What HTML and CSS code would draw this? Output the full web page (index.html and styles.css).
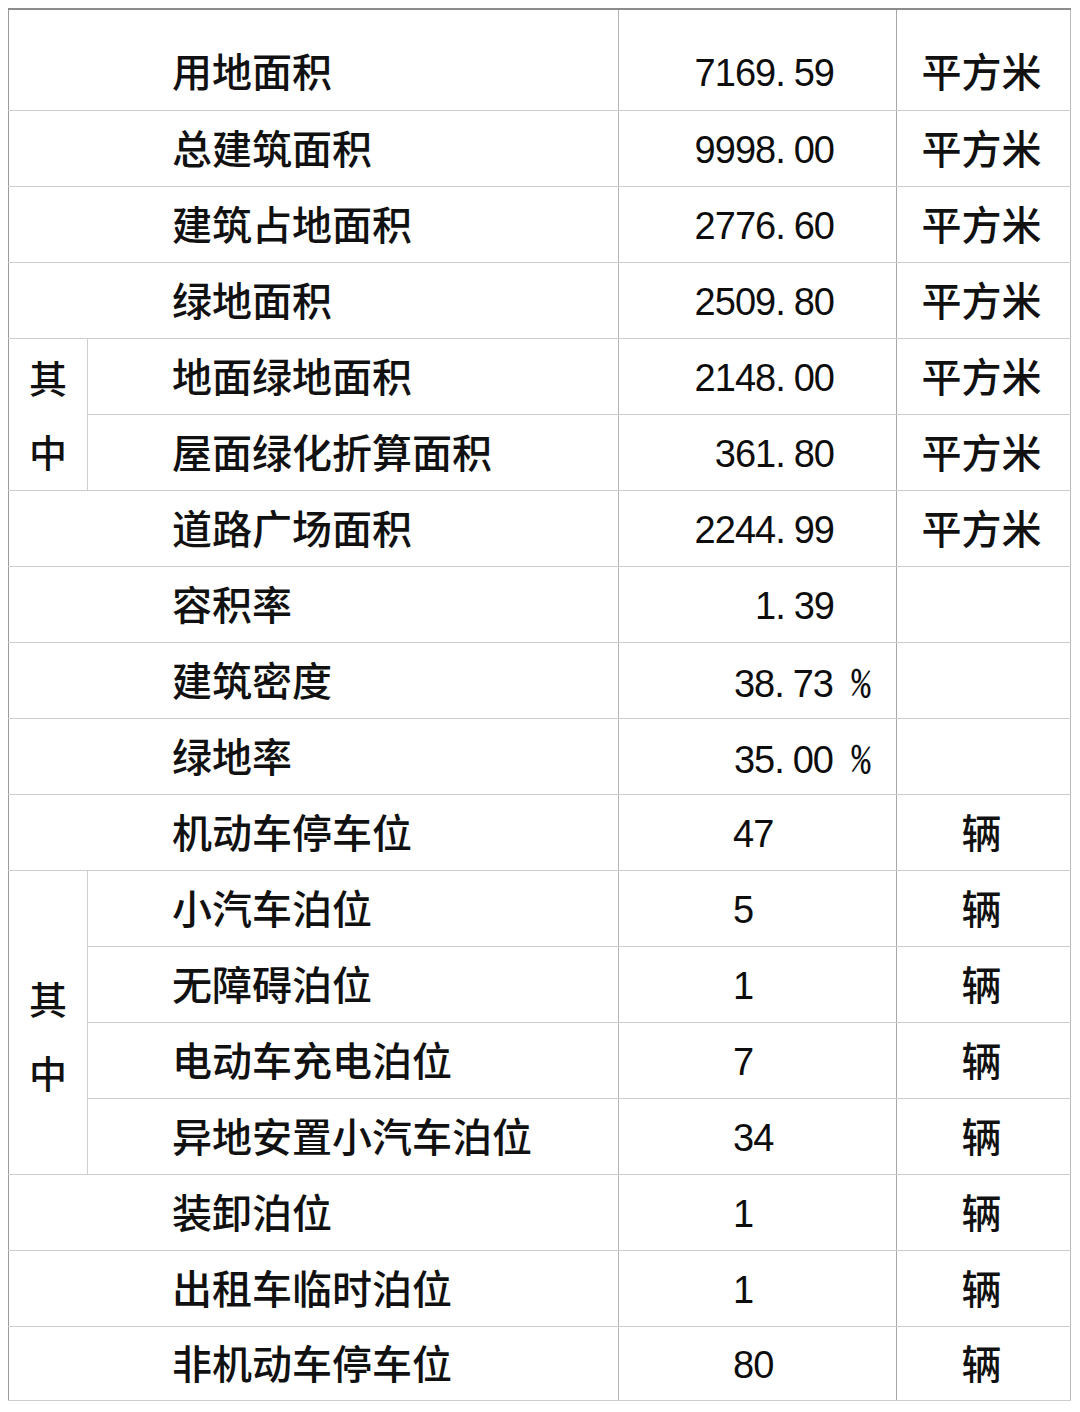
FILE: index.html
```html
<!DOCTYPE html>
<html lang="zh-CN">
<head>
<meta charset="utf-8">
<title>技术经济指标</title>
<link rel="stylesheet" href="styles.css">
</head>
<body>
<table class="sheet">
  <colgroup>
    <col class="c-side">
    <col class="c-label">
    <col class="c-value">
    <col class="c-unit">
  </colgroup>
  <tbody>
    <tr class="first">
      <td class="label" colspan="2">用地面积</td>
      <td class="value dec">7169<span class="dot">.</span>59</td>
      <td class="unit">平方米</td>
    </tr>
    <tr>
      <td class="label" colspan="2">总建筑面积</td>
      <td class="value dec">9998<span class="dot">.</span>00</td>
      <td class="unit">平方米</td>
    </tr>
    <tr>
      <td class="label" colspan="2">建筑占地面积</td>
      <td class="value dec">2776<span class="dot">.</span>60</td>
      <td class="unit">平方米</td>
    </tr>
    <tr>
      <td class="label" colspan="2">绿地面积</td>
      <td class="value dec">2509<span class="dot">.</span>80</td>
      <td class="unit">平方米</td>
    </tr>
    <tr>
      <td class="side" rowspan="2">其<br>中</td>
      <td class="label sub">地面绿地面积</td>
      <td class="value dec">2148<span class="dot">.</span>00</td>
      <td class="unit">平方米</td>
    </tr>
    <tr>
      <td class="label sub">屋面绿化折算面积</td>
      <td class="value dec">361<span class="dot">.</span>80</td>
      <td class="unit">平方米</td>
    </tr>
    <tr>
      <td class="label" colspan="2">道路广场面积</td>
      <td class="value dec">2244<span class="dot">.</span>99</td>
      <td class="unit">平方米</td>
    </tr>
    <tr>
      <td class="label" colspan="2">容积率</td>
      <td class="value dec">1<span class="dot">.</span>39</td>
      <td class="unit"></td>
    </tr>
    <tr>
      <td class="label" colspan="2">建筑密度</td>
      <td class="value pct">38<span class="dot">.</span>73<span class="pc">%</span></td>
      <td class="unit"></td>
    </tr>
    <tr>
      <td class="label" colspan="2">绿地率</td>
      <td class="value pct">35<span class="dot">.</span>00<span class="pc">%</span></td>
      <td class="unit"></td>
    </tr>
    <tr>
      <td class="label" colspan="2">机动车停车位</td>
      <td class="value int">47</td>
      <td class="unit">辆</td>
    </tr>
    <tr>
      <td class="side low" rowspan="4">其<br>中</td>
      <td class="label sub">小汽车泊位</td>
      <td class="value int">5</td>
      <td class="unit">辆</td>
    </tr>
    <tr>
      <td class="label sub">无障碍泊位</td>
      <td class="value int">1</td>
      <td class="unit">辆</td>
    </tr>
    <tr>
      <td class="label sub">电动车充电泊位</td>
      <td class="value int">7</td>
      <td class="unit">辆</td>
    </tr>
    <tr>
      <td class="label sub">异地安置小汽车泊位</td>
      <td class="value int">34</td>
      <td class="unit">辆</td>
    </tr>
    <tr>
      <td class="label" colspan="2">装卸泊位</td>
      <td class="value int">1</td>
      <td class="unit">辆</td>
    </tr>
    <tr>
      <td class="label" colspan="2">出租车临时泊位</td>
      <td class="value int">1</td>
      <td class="unit">辆</td>
    </tr>
    <tr class="last">
      <td class="label" colspan="2">非机动车停车位</td>
      <td class="value int">80</td>
      <td class="unit">辆</td>
    </tr>
  </tbody>
</table>
</body>
</html>
```

FILE: styles.css
```css
html, body {
  margin: 0;
  padding: 0;
  background: #ffffff;
}

body {
  padding: 8px 0 0 8px;
  font-family: "Noto Sans CJK SC", "Noto Sans", sans-serif;
  font-weight: 500;
  color: #111111;
}

.sheet {
  border-collapse: collapse;
  table-layout: fixed;
  width: 1062px;
  border-top: 2px solid #8c8c8c;
  border-left: 1px solid #9a9a9a;
  border-right: 1px solid #bcbcbc;
  border-bottom: 1px solid #7a7a7a;
  font-size: 40px;
  line-height: 1;
}

.c-side { width: 79px; }
.c-label { width: 531px; }
.c-value { width: 278px; }
.c-unit { width: 174px; }

.sheet td {
  height: 71px;
  padding: 0 0 4px 0;
  vertical-align: middle;
  border-top: 1px solid #cdcdcd;
  border-bottom: 1px solid #cdcdcd;
  white-space: nowrap;
}

.sheet tr.first td {
  height: 72px;
  padding-top: 24px;
  border-top: none;
}

.sheet tr.last td {
  height: 69px;
}

.label {
  padding-left: 163px !important;
  text-align: left;
}

.label.sub {
  padding-left: 84px !important;
  border-left: 1px solid #cfcfcf;
}

.sheet td.side {
  height: auto;
  padding: 0 0 2px 0;
  text-align: center;
  font-size: 38px;
  line-height: 74px;
}

.sheet td.side.low {
  padding: 24px 0 0 0;
}

.sheet td.value {
  border-left: 1px solid #b4b4b4;
  font-family: "Liberation Sans", Arial, sans-serif;
  font-weight: 400;
  font-size: 38px;
  letter-spacing: -1px;
  color: #0d0d0d;
  padding-top: 2px;
  padding-bottom: 0;
  height: 73px;
}

.sheet tr.first td.value {
  padding-top: 26px;
  height: 74px;
}

.sheet tr.last td.value {
  height: 71px;
}

.dot {
  margin-right: 9px;
}

.pc {
  margin-left: 18px;
  font-family: "Noto Sans CJK SC", sans-serif;
  font-feature-settings: "hwid" 1;
  font-weight: 400;
  font-size: 40px;
}

.value.dec {
  text-align: right;
  padding-right: 62px !important;
}

.value.pct {
  text-align: right;
  padding-right: 26px !important;
}

.value.int {
  text-align: left;
  padding-left: 114px !important;
}

.unit {
  border-left: 1px solid #a8a8a8;
  text-align: center;
  padding-right: 4px !important;
}
```
